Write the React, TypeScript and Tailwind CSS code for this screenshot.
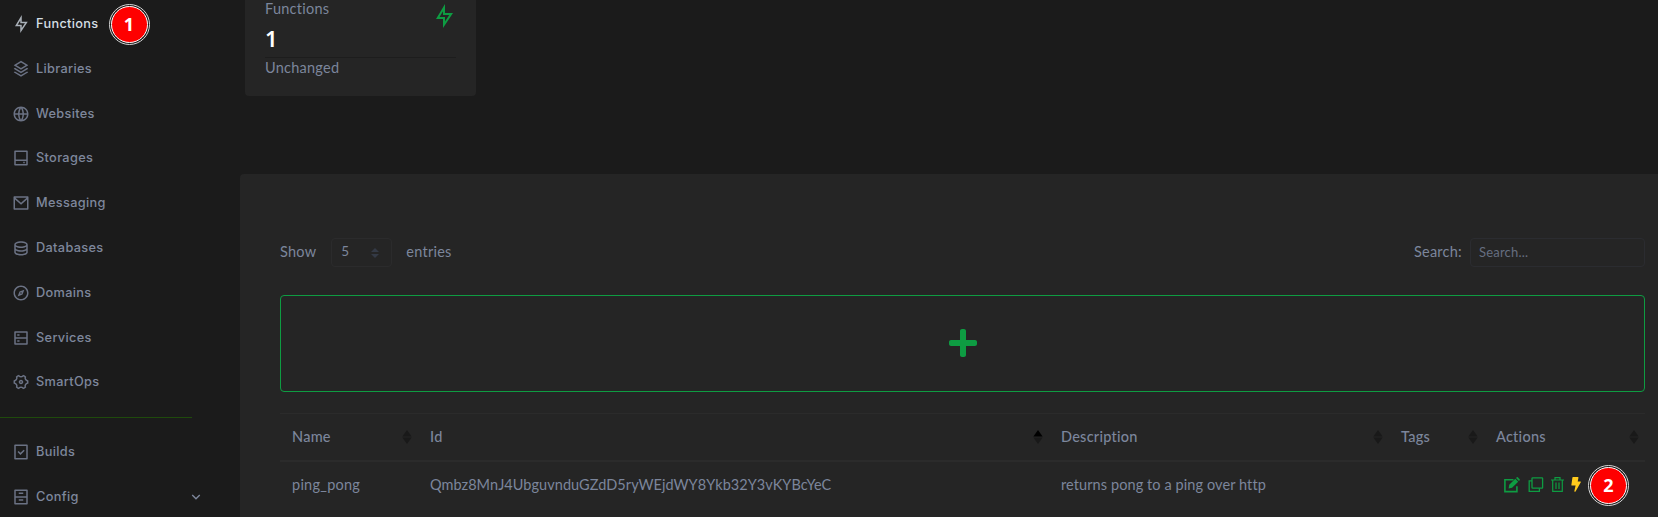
import type { ReactNode } from "react";
import type { IconType } from "react-icons";
import {
  RiFlashlightLine,
  RiStackLine,
  RiGlobalLine,
  RiHardDrive2Line,
  RiMailLine,
  RiDatabase2Line,
  RiCompass3Line,
  RiServerLine,
  RiSettings4Line,
  RiTaskLine,
  RiArchiveDrawerLine,
  RiArrowDownSLine,
} from "react-icons/ri";
import { FaPlus } from "react-icons/fa";

const primary: [string, IconType][] = [
  ["Functions", RiFlashlightLine],
  ["Libraries", RiStackLine],
  ["Websites", RiGlobalLine],
  ["Storages", RiHardDrive2Line],
  ["Messaging", RiMailLine],
  ["Databases", RiDatabase2Line],
  ["Domains", RiCompass3Line],
  ["Services", RiServerLine],
  ["SmartOps", RiSettings4Line],
];

function NavItem({ label, icon: Icon, active, children }: { label: string; icon: IconType; active?: boolean; children?: ReactNode }) {
  return (
    <a className={`flex h-[44.8px] shrink-0 items-center pl-3 ${active ? "text-[#d5dfe3]" : "text-[#7e879c]"}`}>
      <Icon className={`size-[18px] ${active ? "text-[#a9b0b8]" : "text-[#6b7284]"}`} />
      <span className="-mt-px ml-1.5 text-[12.75px] font-medium tracking-[0.33px]">{label}</span>
      {children}
    </a>
  );
}

function Badge({ children }: { children: ReactNode }) {
  return (
    <span className="flex size-[41px] items-center justify-center rounded-full border border-[#d8d8d8] bg-[#1b1b1b] p-px">
      <span className="flex size-full items-center justify-center rounded-full border border-white bg-[#fe0000] font-['Noto_Sans'] text-[18px] font-bold tracking-normal text-white">
        {children}
      </span>
    </span>
  );
}

function Sort({ up }: { up?: boolean }) {
  return (
    <svg viewBox="0 0 10 14" className="h-3.5 w-2.5">
      <path d="M5 0l4.6 6.4H.4z" fill={up ? "#000" : "#191919"} />
      <path d="M5 14L.4 7.6h9.2z" fill="#191919" />
    </svg>
  );
}

function Th({ children, up }: { children: ReactNode; up?: boolean }) {
  return (
    <div className="flex items-center justify-between pr-1.5 pl-3">
      <span className="-mt-px font-medium">{children}</span>
      <Sort up={up} />
    </div>
  );
}

const columns = "grid grid-cols-[138px_631px_340px_95px_161px]";

export default function App() {
  return (
    <div className="flex h-[517px] overflow-hidden bg-[#1b1b1b] font-['Lato',sans-serif] text-[14.5px] tracking-[0.25px] text-[#7c869c]">
      <nav className="relative flex w-[240px] shrink-0 flex-col pt-[1.6px] font-['Inter',sans-serif]">
        {primary.map(([label, icon], i) => (
          <NavItem key={label} label={label} icon={icon} active={i === 0} />
        ))}
        <div className="mt-[11.9px] mb-[12px] h-px w-48 shrink-0 bg-[#1f4a0c]" />
        <NavItem label="Builds" icon={RiTaskLine} />
        <NavItem label="Config" icon={RiArchiveDrawerLine}>
          <RiArrowDownSLine className="mr-9 ml-auto size-[16px]" />
        </NavItem>
        <div className="absolute top-[4px] left-[108.5px]">
          <Badge>1</Badge>
        </div>
      </nav>
      <main className="flex min-w-0 flex-1 flex-col">
        <section className="ml-[5px] flex h-24 w-[231px] shrink-0 rounded-b bg-[#252525] px-5">
          <div className="flex w-full flex-col">
            <div className="flex h-[58px] justify-between border-b border-[#1d1d1d]">
              <div>
                <div className="leading-[17px]">Functions</div>
                <div className="font-['Noto_Sans'] text-[22px] leading-[43px] font-semibold text-white">1</div>
              </div>
              <RiFlashlightLine className="mt-1 size-6 text-[#0e9c42]" />
            </div>
            <div className="leading-[20px]">Unchanged</div>
          </div>
        </section>
        <section className="mt-[78px] flex flex-1 flex-col rounded-tl bg-[#252525] pt-16 pr-[13px] pl-10">
          <div className="flex h-[29px] items-center">
            <span className="-mt-0.5">Show</span>
            <span className="ml-[15px] flex h-[29px] w-[61px] items-center justify-between rounded border border-[#2b2b2c] pr-3 pl-[9px] text-[13.5px]">
              <span className="-mt-0.5">5</span>
              <svg viewBox="0 0 8 10" className="h-2.5 w-2">
                <path d="M4 0l4 4H0zM4 10L0 6h8z" fill="#343a46" />
              </svg>
            </span>
            <span className="-mt-0.5 ml-3.5">entries</span>
            <span className="-mt-0.5 ml-auto">Search:</span>
            <span className="ml-2 flex h-[29px] w-[175px] items-center rounded border border-[#2b2c30] pl-2 text-[13px] tracking-[0.2px] text-[#666e80]">Search...</span>
          </div>
          <div className="mt-7 flex h-[97px] items-center justify-center rounded border border-[#0e9c42] pb-0.5">
            <FaPlus className="size-8 text-[#0e9c42]" />
          </div>
          <div className={`${columns} mt-[21px] h-[49px] border-t border-b-2 border-t-[#2b2b2b] border-b-[#2b2b2b]`}>
            <Th>Name</Th>
            <Th up>Id</Th>
            <Th>Description</Th>
            <Th>Tags</Th>
            <Th>Actions</Th>
          </div>
          <div className={`${columns} h-[45px] items-center`}>
            <span className="pl-3">ping_pong</span>
            <span className="pl-3 tracking-[0.05px]">Qmbz8MnJ4UbguvnduGZdD5ryWEjdWY8Ykb32Y3vKYBcYeC</span>
            <span className="pl-3 tracking-[0.09px]">returns pong to a ping over http</span>
            <span />
            <span className="flex items-center pl-5 text-[#0e9c42]">
              <svg viewBox="0 0 16 16" className="size-4" fill="none">
                <path d="M9.5 2.7H.9v11.9h12V9.3" stroke="currentColor" strokeWidth="1.6" />
                <path d="M4.6 11.4l.6-3.6 6.1-6 2.9 2.9-6.1 6.1zM12 1.1l.8-.8q.5-.5 1 0l1.9 1.9q.4.5 0 1l-.8.8z" fill="currentColor" />
              </svg>
              <svg viewBox="0 0 16 16" className="ml-2 size-4" fill="none" stroke="currentColor" strokeWidth="1.3">
                <rect x="4" y=".9" width="10.6" height="10.3" rx=".6" />
                <path d="M4 3.9H1.2v10.4h10.2v-3" />
              </svg>
              <svg viewBox="0 0 13 15" className="ml-[7px] h-[15px] w-[13px]" fill="none" stroke="currentColor">
                <path d="M0 3h13M4 3V.6h5V3M1.7 3v11.4h9.6V3M5 5.5v6.5M8 5.5v6.5" strokeWidth="1.2" />
              </svg>
              <svg viewBox="0 0 10 15" className="ml-[7px] h-[15px] w-[10px]" fill="#ffca1c">
                <path d="M2 0h5q.6 0 .5.6L6.7 4.5h2.6q.8 0 .5.7L4.7 14.2q-.4.7-1 .5-.5-.2-.3-.9L4.6 8.5H1Q.3 8.5.4 7.8L1.4.5Q1.5 0 2 0z" />
              </svg>
              <span className="mt-px ml-[7px]">
                <Badge>2</Badge>
              </span>
            </span>
          </div>
        </section>
      </main>
    </div>
  );
}
